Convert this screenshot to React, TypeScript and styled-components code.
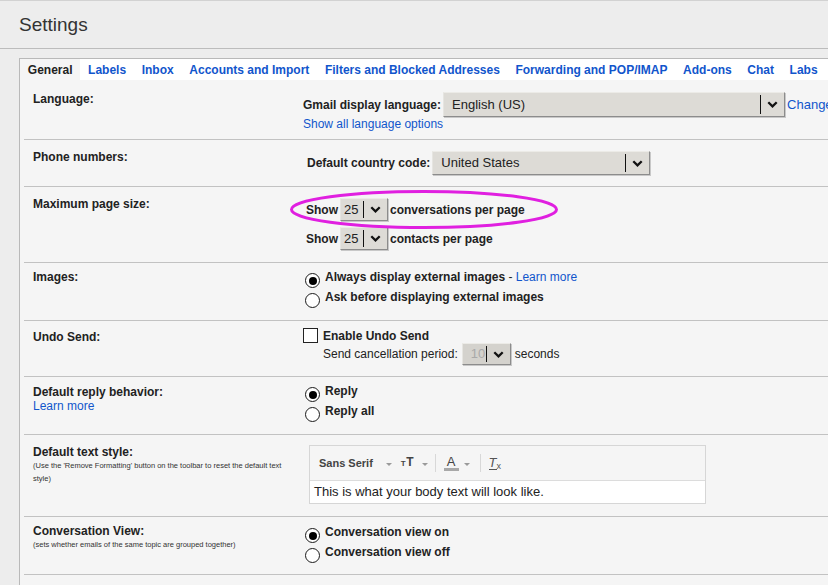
import React from 'react';
import styled, { createGlobalStyle } from 'styled-components';

const GlobalStyle = createGlobalStyle`
  html, body {
    margin: 0;
    padding: 0;
    overflow: hidden;
  }
  body {
    background: #ededed;
    font-family: 'Liberation Sans', Arial, sans-serif;
    color: #222;
  }
`;

const tabs = [
  'General',
  'Labels',
  'Inbox',
  'Accounts and Import',
  'Filters and Blocked Addresses',
  'Forwarding and POP/IMAP',
  'Add-ons',
  'Chat',
  'Labs',
];

const Header = styled.header`
  height: 47px;
  border-top: 1px solid #d2d2d2;
  border-bottom: 1px solid #bcbcbc;
  display: flex;
  align-items: center;
  padding-left: 19px;
  font-size: 19px;
  color: #333;
`;

const Frame = styled.div`
  margin: 9px 0 0 19px;
  width: 1000px;
  border-top: 1px solid #b9b9b9;
  border-left: 1px solid #b9b9b9;
  background: #f5f5f5;
`;

const TabBar = styled.nav`
  display: flex;
  height: 21px;
  background: #fff;
`;

const Tab = styled.a<{ $active?: boolean }>`
  display: flex;
  align-items: center;
  padding: 0 7.8px;
  font-size: 12px;
  font-weight: bold;
  white-space: nowrap;
  color: ${(p) => (p.$active ? '#222' : '#1155cc')};
  background: ${(p) => (p.$active ? '#f5f5f5' : 'transparent')};
`;

const Content = styled.div`
  padding-left: 4px;
`;

const Row = styled.div<{ $h: number; $last?: boolean }>`
  display: grid;
  grid-template-columns: 279px 1fr;
  box-sizing: border-box;
  height: ${(p) => p.$h}px;
  border-bottom: ${(p) => (p.$last ? 'none' : '1px solid #c2c2c2')};
`;

const Label = styled.div<{ $pt: number }>`
  padding: ${(p) => p.$pt}px 0 0 9px;
  font-size: 12px;
  line-height: 14px;
  font-weight: bold;
  color: #222;
`;

const Hint = styled.div`
  max-width: 256px;
  font-size: 7.5px;
  line-height: 13px;
  font-weight: normal;
  color: #333;
`;

const Value = styled.div<{ $pt: number; $indent?: number }>`
  position: relative;
  padding: ${(p) => p.$pt}px 0 0 ${(p) => p.$indent ?? 0}px;
  font-size: 12px;
  line-height: 14px;
`;

const Line = styled.div<{ $gap?: number }>`
  display: flex;
  align-items: center;
  gap: ${(p) => p.$gap ?? 4}px;
  white-space: nowrap;
`;

const Stack = styled.div<{ $gap: number }>`
  display: flex;
  flex-direction: column;
  gap: ${(p) => p.$gap}px;
`;

const Strong = styled.span`
  font-weight: bold;
  color: #222;
`;

const Link = styled.a<{ $size?: number }>`
  color: #1155cc;
  font-size: ${(p) => p.$size ?? 12}px;
  font-weight: normal;
  cursor: pointer;
`;

const SelectBox = styled.div<{ $w: number; $h: number; $disabled?: boolean }>`
  display: flex;
  box-sizing: border-box;
  width: ${(p) => p.$w}px;
  height: ${(p) => p.$h}px;
  flex-shrink: 0;
  background: ${(p) => (p.$disabled ? '#d4d2cd' : '#dddbd6')};
  border: 1px solid;
  border-color: #ecebe7 #8c8c8c #8c8c8c #e6e5e1;
  box-shadow: 1px 1px 0 #c8c8c8;
  font-size: 13px;
  color: ${(p) => (p.$disabled ? '#a9a9a9' : '#222')};
`;

const SelectText = styled.span<{ $pad: number }>`
  flex: 1;
  display: flex;
  align-items: center;
  padding-left: ${(p) => p.$pad}px;
  overflow: hidden;
`;

const SelectArrow = styled.span`
  width: 23px;
  margin: 2px 0;
  border-left: 1px solid #111;
  display: flex;
  align-items: center;
  justify-content: center;
`;

const Chevron = () => (
  <svg width="11" height="7" viewBox="0 0 11 7">
    <path d="M1.3 1.3 L5.5 5.4 L9.7 1.3" fill="none" stroke="#111" strokeWidth="2.3" />
  </svg>
);

const Select = ({
  value,
  w,
  h,
  pad,
  disabled,
}: {
  value: string;
  w: number;
  h: number;
  pad: number;
  disabled?: boolean;
}) => (
  <SelectBox $w={w} $h={h} $disabled={disabled}>
    <SelectText $pad={pad}>{value}</SelectText>
    <SelectArrow>
      <Chevron />
    </SelectArrow>
  </SelectBox>
);

const RadioLine = styled.div`
  display: flex;
  align-items: flex-start;
  gap: 5px;
  height: 20px;
  line-height: 14px;
  font-weight: bold;
  white-space: nowrap;
`;

const Radio = styled.span<{ $on?: boolean }>`
  position: relative;
  width: 15px;
  height: 15px;
  margin-top: 3px;
  flex-shrink: 0;
  box-sizing: border-box;
  border: 1px solid #1a1a1a;
  border-radius: 50%;
  background: #fff;

  &::after {
    content: '';
    display: ${(p) => (p.$on ? 'block' : 'none')};
    position: absolute;
    inset: 2.5px;
    border-radius: 50%;
    background: #000;
  }
`;

const Plain = styled.span`
  font-weight: normal;
`;

const Checkbox = styled.span`
  width: 15px;
  height: 15px;
  box-sizing: border-box;
  border: 1px solid #222;
  background: #fff;
  flex-shrink: 0;
`;

const Indented = styled.div`
  padding-left: 20px;
`;

const Editor = styled.div`
  width: 397px;
  box-sizing: border-box;
  border: 1px solid #d6d6d6;
`;

const Toolbar = styled.div`
  display: flex;
  align-items: center;
  height: 34px;
  padding-left: 9px;
  background: #f5f5f5;
  border-bottom: 1px solid #dcdcdc;
  color: #444;
`;

const FontName = styled.span`
  font-size: 11px;
  font-weight: bold;
  color: #444;
`;

const Caret = styled.span<{ $ml: number }>`
  margin-left: ${(p) => p.$ml}px;
  margin-top: 2px;
  width: 0;
  height: 0;
  border-left: 3px solid transparent;
  border-right: 3px solid transparent;
  border-top: 3px solid #9a9a9a;
`;

const SizeIcon = styled.span<{ $ml: number }>`
  margin-left: ${(p) => p.$ml}px;
  display: flex;
  align-items: baseline;
  font-weight: bold;
  font-size: 12px;
  color: #444;
`;

const SmallT = styled.span`
  font-size: 8px;
  margin-right: 0.5px;
`;

const Divider = styled.span<{ $ml: number }>`
  margin-left: ${(p) => p.$ml}px;
  width: 1px;
  height: 18px;
  background: #d8d8d8;
`;

const ColorA = styled.span<{ $ml: number }>`
  margin-left: ${(p) => p.$ml}px;
  width: 15px;
  text-align: center;
  font-size: 13px;
  line-height: 13px;
  color: #444;
  border-bottom: 3px solid #a8a8a8;
`;

const ClearFmt = styled.span<{ $ml: number }>`
  margin-left: ${(p) => p.$ml}px;
  display: flex;
  align-items: flex-end;
  font-size: 13px;
  font-style: italic;
  color: #555;
`;

const UnderT = styled.span`
  border-bottom: 1px solid #555;
  line-height: 13px;
`;

const SubX = styled.span`
  font-size: 9px;
  font-style: normal;
  margin-bottom: -3px;
`;

const EditorBody = styled.div`
  height: 22px;
  display: flex;
  align-items: center;
  padding-left: 4px;
  background: #fff;
  font-size: 13px;
  color: #222;
`;

const Mark = styled.svg`
  position: absolute;
  left: -16px;
  top: 1px;
  pointer-events: none;
`;

const App = () => {
  return (
    <>
      <GlobalStyle />
      <Header>Settings</Header>
      <Frame>
        <TabBar>
          {tabs.map((t, i) => (
            <Tab key={t} $active={i === 0}>
              {t}
            </Tab>
          ))}
        </TabBar>
        <Content>
          <Row $h={60}>
            <Label $pt={12}>Language:</Label>
            <Value $pt={12}>
              <Line $gap={2}>
                <Strong>Gmail display language:</Strong>
                <Select value="English (US)" w={342} h={25} pad={8} />
                <Link $size={13}>Change</Link>
              </Line>
              <Link>Show all language options</Link>
            </Value>
          </Row>

          <Row $h={47}>
            <Label $pt={10}>Phone numbers:</Label>
            <Value $pt={11} $indent={4}>
              <Line $gap={2}>
                <Strong>Default country code:</Strong>
                <Select value="United States" w={218} h={24} pad={8} />
              </Line>
            </Value>
          </Row>

          <Row $h={76}>
            <Label $pt={10}>Maximum page size:</Label>
            <Value $pt={11} $indent={3}>
              <Stack $gap={6}>
                <Line $gap={2}>
                  <Strong>Show</Strong>
                  <Select value="25" w={48} h={23} pad={3} />
                  <Strong>conversations per page</Strong>
                </Line>
                <Line $gap={2}>
                  <Strong>Show</Strong>
                  <Select value="25" w={48} h={23} pad={3} />
                  <Strong>contacts per page</Strong>
                </Line>
              </Stack>
              <Mark width="272" height="42" viewBox="0 0 272 42">
                <ellipse
                  cx="137"
                  cy="21.5"
                  rx="132.5"
                  ry="18"
                  fill="none"
                  stroke="#e01fe0"
                  strokeWidth="3"
                />
              </Mark>
            </Value>
          </Row>

          <Row $h={58}>
            <Label $pt={7}>Images:</Label>
            <Value $pt={7} $indent={2}>
              <RadioLine>
                <Radio $on />
                <span>
                  Always display external images<Plain> - </Plain>
                  <Link>Learn more</Link>
                </span>
              </RadioLine>
              <RadioLine>
                <Radio />
                <span>Ask before displaying external images</span>
              </RadioLine>
            </Value>
          </Row>

          <Row $h={56}>
            <Label $pt={9}>Undo Send:</Label>
            <Value $pt={7}>
              <Line $gap={5}>
                <Checkbox />
                <Strong>Enable Undo Send</Strong>
              </Line>
              <Indented>
                <Line $gap={4}>
                  <span>Send cancellation period:</span>
                  <Select value="10" w={49} h={22} pad={8} disabled />
                  <span>seconds</span>
                </Line>
              </Indented>
            </Value>
          </Row>

          <Row $h={58}>
            <Label $pt={8}>
              Default reply behavior:
              <div>
                <Link>Learn more</Link>
              </div>
            </Label>
            <Value $pt={7} $indent={2}>
              <RadioLine>
                <Radio $on />
                <span>Reply</span>
              </RadioLine>
              <RadioLine>
                <Radio />
                <span>Reply all</span>
              </RadioLine>
            </Value>
          </Row>

          <Row $h={82}>
            <Label $pt={10}>
              Default text style:
              <Hint>
                (Use the 'Remove Formatting' button on the toolbar to reset the default text style)
              </Hint>
            </Label>
            <Value $pt={10} $indent={6}>
              <Editor>
                <Toolbar>
                  <FontName>Sans Serif</FontName>
                  <Caret $ml={13} />
                  <SizeIcon $ml={9}>
                    <SmallT>T</SmallT>T
                  </SizeIcon>
                  <Caret $ml={8} />
                  <Divider $ml={7} />
                  <ColorA $ml={8}>A</ColorA>
                  <Caret $ml={5} />
                  <Divider $ml={10} />
                  <ClearFmt $ml={8}>
                    <UnderT>T</UnderT>
                    <SubX>x</SubX>
                  </ClearFmt>
                </Toolbar>
                <EditorBody>This is what your body text will look like.</EditorBody>
              </Editor>
            </Value>
          </Row>

          <Row $h={58}>
            <Label $pt={7}>
              Conversation View:
              <Hint>(sets whether emails of the same topic are grouped together)</Hint>
            </Label>
            <Value $pt={8} $indent={2}>
              <RadioLine>
                <Radio $on />
                <span>Conversation view on</span>
              </RadioLine>
              <RadioLine>
                <Radio />
                <span>Conversation view off</span>
              </RadioLine>
            </Value>
          </Row>

          <Row $h={40} $last />
        </Content>
      </Frame>
    </>
  );
};

export default App;
